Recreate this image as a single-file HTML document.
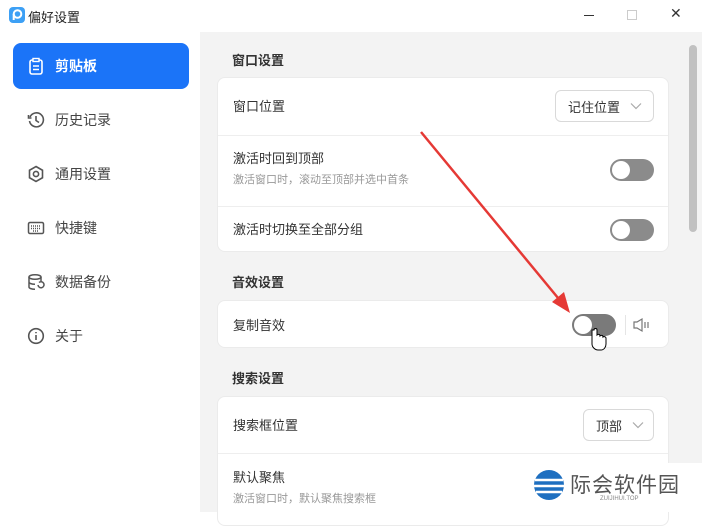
<!DOCTYPE html><html><head><meta charset="utf-8"><style>
*{margin:0;padding:0;box-sizing:border-box}
body{width:702px;height:512px;overflow:hidden;background:#fff;font-family:"Liberation Sans","Noto Sans CJK SC",sans-serif;position:relative;color:#333}
.abs{position:absolute}
.title{left:28px;top:7px;font-size:13px;color:#222}
.side{left:0;top:32px;width:200px;height:480px;background:#fff}
.nav{position:absolute;left:13px;width:176px;height:46px;border-radius:8px;font-size:14px;color:#444;display:flex;align-items:center;padding-left:14px;gap:10px}
.nav.act{background:#1b74f8;color:#fff;font-weight:bold}
.main{left:200px;top:32px;width:502px;height:480px;background:#f3f3f3}
.sec{font-size:13px;font-weight:bold;color:#333;left:232px}
.card{left:217px;width:452px;background:#fff;border-radius:8px;border:1px solid #ebebeb}
.row{position:absolute;left:15px;font-size:13px;color:#333}
.sub{font-size:11px;color:#999;margin-top:4px}
.line{position:absolute;left:0;right:0;height:1px;background:#eee}
.tog{position:absolute;width:44px;height:22px;border-radius:11px;background:#8b8b8b}
.tog:after{content:"";position:absolute;left:2px;top:2px;width:18px;height:18px;border-radius:50%;background:#fff}
.sel{position:absolute;height:32px;border:1px solid #d9d9d9;border-radius:6px;font-size:13px;color:#333;display:flex;align-items:center;padding-left:12px;gap:10px}
</style></head><body>
<svg class="abs" style="left:9px;top:7px" width="16" height="16"><rect width="16" height="16" rx="4" fill="#3da0f5"/><circle cx="8.5" cy="7" r="3.8" fill="none" stroke="#fff" stroke-width="2"/><path d="M4.7 7v6" stroke="#fff" stroke-width="2"/></svg>
<div class="abs title">偏好设置</div>
<div class="abs" style="left:584px;top:15px;width:10px;height:1px;background:#333"></div>
<div class="abs" style="left:627px;top:10px;width:10px;height:10px;border:1px solid #ccc"></div>
<div class="abs" style="left:670px;top:5px;font-size:14px;color:#333">✕</div>
<div class="abs side">
<div class="nav act" style="top:11px"><svg width="18" height="18"><rect x="3" y="3" width="12" height="14" rx="2" fill="none" stroke="#fff" stroke-width="1.6"/><rect x="6" y="1.5" width="6" height="3" fill="#1b74f8" stroke="#fff" stroke-width="1.4"/><path d="M6 9h6M6 12.5h6" stroke="#fff" stroke-width="1.4"/></svg>剪贴板</div>
<div class="nav" style="top:65px"><svg width="18" height="18" fill="none" stroke="#555" stroke-width="1.6"><path d="M3 6A7 7 0 1 1 2.5 10"/><path d="M9 5v4.5l3 2"/><path d="M1.5 4v3h3"/></svg>历史记录</div>
<div class="nav" style="top:119px"><svg width="18" height="18" fill="none" stroke="#555" stroke-width="1.6"><path d="M9 1.5l6.5 3.75v7.5L9 16.5l-6.5-3.75v-7.5z"/><circle cx="9" cy="9" r="2.6"/></svg>通用设置</div>
<div class="nav" style="top:173px"><svg width="18" height="18" fill="none" stroke="#555" stroke-width="1.5"><rect x="1.5" y="3.5" width="15" height="11" rx="1.5"/><path d="M4 7h10M4 9.5h10M6 12h6" stroke-dasharray="1 1"/></svg>快捷键</div>
<div class="nav" style="top:227px"><svg width="18" height="18" fill="none" stroke="#555" stroke-width="1.5"><ellipse cx="8" cy="4" rx="6" ry="2.3"/><path d="M2 4v10c0 1.3 2.7 2.3 6 2.3M14 4v4M2 9c0 1.3 2.7 2.3 6 2.3"/><path d="M11 12a3 3 0 1 0 1-2.5"/></svg>数据备份</div>
<div class="nav" style="top:281px"><svg width="18" height="18" fill="none" stroke="#555" stroke-width="1.6"><circle cx="9" cy="9" r="7.3"/><path d="M9 8v5M9 5v1.2"/></svg>关于</div>
</div>
<div class="abs main"></div>
<div class="abs" style="left:689px;top:45px;width:8px;height:187px;background:#c1c1c1;border-radius:4px"></div>
<div class="abs sec" style="top:50px">窗口设置</div>
<div class="abs card" style="top:77px;height:175px">
<div class="row" style="top:18px">窗口位置</div>
<div class="sel" style="left:337px;top:12px;width:99px">记住位置 <svg width="12" height="8"><path d="M1 1.5l5 5 5-5" fill="none" stroke="#aaa" stroke-width="1.2"/></svg></div>
<div class="line" style="top:57px"></div>
<div class="row" style="top:70px">激活时回到顶部<div class="sub">激活窗口时，滚动至顶部并选中首条</div></div>
<div class="tog" style="left:392px;top:81px"></div>
<div class="line" style="top:128px"></div>
<div class="row" style="top:141px">激活时切换至全部分组</div>
<div class="tog" style="left:392px;top:141px"></div>
</div>
<div class="abs sec" style="top:272px">音效设置</div>
<div class="abs card" style="top:300px;height:48px">
<div class="row" style="top:14px">复制音效</div>
<div class="tog" style="left:354px;top:13px;background:#7a7a7a"></div>
<div style="position:absolute;left:407px;top:14px;width:1px;height:20px;background:#e5e5e5"></div>
<svg style="position:absolute;left:414px;top:16px" width="20" height="16" fill="none" stroke="#777" stroke-width="1.2"><path d="M2 5h3l5-3v12l-5-3H2z"/><path d="M13 5v6M16 5v6"/></svg>
</div>
<div class="abs sec" style="top:368px">搜索设置</div>
<div class="abs card" style="top:396px;height:130px">
<div class="row" style="top:18px">搜索框位置</div>
<div class="sel" style="left:365px;top:12px;width:71px">顶部 <svg width="12" height="8"><path d="M1 1.5l5 5 5-5" fill="none" stroke="#aaa" stroke-width="1.2"/></svg></div>
<div class="line" style="top:56px"></div>
<div class="row" style="top:70px">默认聚焦<div class="sub">激活窗口时，默认聚焦搜索框</div></div>
</div>
<svg class="abs" style="left:0;top:0" width="702" height="512"><path d="M421 132L563 304" stroke="#e53935" stroke-width="2.5"/><path d="M570 313L552 302L564 292z" fill="#e53935"/>
<path d="M592 330v14c0 3 3 6 6 6h3c3 0 5-3 5-6v-6c0-1-2-2-3-1 0-2-2-2-3-1 0-2-2-2-3-1v-5c0-2-3-2-3 0z" fill="#fff" stroke="#000" stroke-width="1"/></svg>
<div class="abs" style="left:530px;top:463px;width:172px;height:49px;background:#fff"></div>
<svg class="abs" style="left:532px;top:468px" width="34" height="34"><circle cx="17" cy="17" r="15" fill="#1e6fc0"/><path d="M3 12h28M2 18h30M4 24h26" stroke="#fff" stroke-width="2.5"/></svg>
<div class="abs" style="left:570px;top:469px;font-size:21px;color:#555;letter-spacing:1px">际会软件园</div>
<div class="abs" style="left:600px;top:496px;font-size:6px;color:#888">ZUIJIHUI.TOP</div>
</body></html>
